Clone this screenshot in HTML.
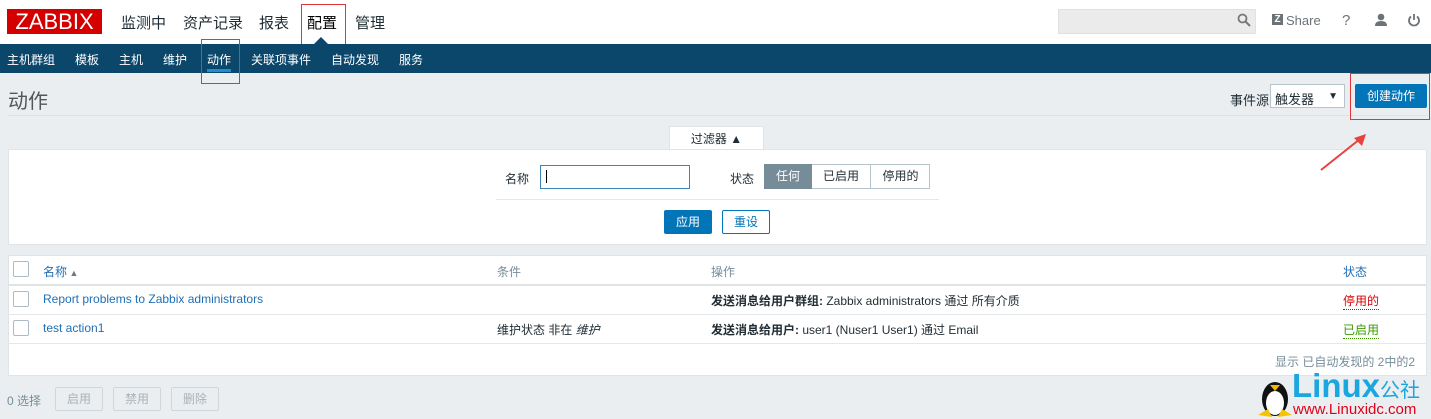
<!DOCTYPE html>
<html><head><meta charset="utf-8"><style>
*{box-sizing:border-box;margin:0;padding:0}
body{width:1431px;height:419px;overflow:hidden;background:#ebeef0;font-family:"Liberation Sans","Noto Sans CJK SC",sans-serif;font-size:12px;color:#1f2c33;position:relative}
.a{position:absolute;white-space:nowrap}
.top{position:absolute;left:0;top:0;width:1431px;height:44px;background:#fff}
.nav{position:absolute;left:0;top:44px;width:1431px;height:29px;background:#0b466b}
.nav span{position:absolute;top:7px;color:#fff;font-size:12px}
.btn{position:absolute;border:1px solid #0275b8;border-radius:2px;text-align:center;font-size:12px}
.dis{position:absolute;border:1px solid #d0d6da;color:#a8b2b8;border-radius:2px;text-align:center;height:24px;line-height:22px;top:387px}
.cb{position:absolute;width:16px;height:16px;border:1px solid #acbbc4;border-radius:2px;background:#fff}
.blue{color:#1f6fb5}
</style></head><body>
<div class="top"></div>
<div class="a" style="left:7px;top:9px;width:95px;height:25px;background:#d40000;color:#fff;font-size:22px;line-height:25px;text-align:center">ZABBIX</div>
<div class="a" style="left:121px;top:12px;font-size:15px">监测中</div>
<div class="a" style="left:183px;top:12px;font-size:15px">资产记录</div>
<div class="a" style="left:259px;top:12px;font-size:15px">报表</div>
<div class="a" style="left:301px;top:4px;width:45px;height:42px;border:1px solid #e0363a"></div>
<div class="a" style="left:307px;top:12px;font-size:15px;color:#000">配置</div>
<div class="a" style="left:314px;top:37px;width:0;height:0;border-left:7px solid transparent;border-right:7px solid transparent;border-bottom:7px solid #0b466b"></div>
<div class="a" style="left:355px;top:12px;font-size:15px">管理</div>
<div class="a" style="left:1058px;top:9px;width:198px;height:25px;background:#ebebeb;border:1px solid #dfe2e4"></div>
<svg class="a" style="left:1237px;top:13px" width="14" height="14" viewBox="0 0 14 14"><circle cx="5.5" cy="5.5" r="4" fill="none" stroke="#777" stroke-width="1.8"/><line x1="8.5" y1="8.5" x2="13" y2="13" stroke="#777" stroke-width="2"/></svg>
<div class="a" style="left:1272px;top:14px;width:11px;height:11px;background:#6b7378;color:#fff;font-size:10px;font-weight:bold;line-height:11px;text-align:center">Z</div>
<div class="a" style="left:1286px;top:13px;color:#6b7378;font-size:13px">Share</div>
<div class="a" style="left:1342px;top:12px;color:#6b7378;font-size:15px">?</div>
<svg class="a" style="left:1374px;top:13px" width="14" height="14" viewBox="0 0 14 14"><circle cx="7" cy="4" r="3.3" fill="#6b7378"/><path d="M1 13 Q1 8 7 8 Q13 8 13 13Z" fill="#6b7378"/></svg>
<svg class="a" style="left:1407px;top:13px" width="14" height="14" viewBox="0 0 14 14"><path d="M4 3.5 A5 5 0 1 0 10 3.5" fill="none" stroke="#6b7378" stroke-width="1.8"/><line x1="7" y1="1" x2="7" y2="7" stroke="#6b7378" stroke-width="1.8"/></svg>
<div class="nav">
<span style="left:7px">主机群组</span><span style="left:75px">模板</span><span style="left:119px">主机</span><span style="left:163px">维护</span><span style="left:207px">动作</span><span style="left:251px">关联项事件</span><span style="left:331px">自动发现</span><span style="left:399px">服务</span>
<div class="a" style="left:207px;top:25px;width:24px;height:3px;background:#1f8dd6"></div>
</div>
<div class="a" style="left:201px;top:39px;width:39px;height:45px;border:1px solid #e0363a"></div>
<div class="a" style="left:8px;top:85px;font-size:20px;color:#555">动作</div>
<div class="a" style="left:8px;top:115px;width:1419px;height:1px;background:#dde2e5"></div>
<div class="a" style="left:1230px;top:90px;font-size:13px">事件源</div>
<div class="a" style="left:1270px;top:84px;width:75px;height:24px;background:#fff;border:1px solid #b8c4cb;padding:4px 4px;font-size:13px">触发器<span style="position:absolute;right:6px;top:6px;font-size:10px">▼</span></div>
<div class="btn" style="left:1355px;top:84px;width:72px;height:24px;background:#0275b8;color:#fff;line-height:22px">创建动作</div>
<div class="a" style="left:1350px;top:73px;width:80px;height:47px;border:1px solid #e0363a"></div>
<div class="a" style="left:669px;top:126px;width:95px;height:24px;background:#fff;border:1px solid #dfe4e7;border-bottom:none;text-align:center;line-height:24px;font-size:12px">过滤器 ▲</div>
<div class="a" style="left:8px;top:149px;width:1419px;height:96px;background:#fff;border:1px solid #dfe4e7"></div>
<div class="a" style="left:505px;top:170px;font-size:12px">名称</div>
<div class="a" style="left:540px;top:165px;width:150px;height:24px;border:1px solid #3d84b8;background:#fff"></div>
<div class="a" style="left:546px;top:170px;width:1px;height:13px;background:#000"></div>
<div class="a" style="left:730px;top:170px">状态</div>
<div class="a" style="left:764px;top:164px;width:166px;height:25px;border:1px solid #b8c4cb;background:#fff"></div>
<div class="a" style="left:764px;top:164px;width:48px;height:25px;background:#768d99;color:#fff;text-align:center;line-height:25px">任何</div>
<div class="a" style="left:812px;top:164px;width:59px;height:25px;border-right:1px solid #b8c4cb;text-align:center;line-height:25px">已启用</div>
<div class="a" style="left:871px;top:164px;width:59px;height:25px;text-align:center;line-height:25px">停用的</div>
<div class="a" style="left:496px;top:199px;width:443px;height:1px;background:#e5e8ea"></div>
<div class="btn" style="left:664px;top:210px;width:48px;height:24px;background:#0275b8;color:#fff;line-height:22px">应用</div>
<div class="btn" style="left:722px;top:210px;width:48px;height:24px;background:#fff;color:#0275b8;line-height:22px">重设</div>
<svg class="a" style="left:1318px;top:132px" width="52" height="42" viewBox="0 0 52 42"><line x1="3" y1="38" x2="42" y2="7" stroke="#e8423e" stroke-width="2"/><path d="M48 2 L36 6 L44 14Z" fill="#e8423e"/></svg>
<div class="a" style="left:8px;top:255px;width:1419px;height:121px;background:#fff;border:1px solid #dfe4e7"></div>
<div class="a" style="left:8px;top:284px;width:1419px;height:2px;background:#dfe4e7"></div>
<div class="a" style="left:8px;top:314px;width:1419px;height:1px;background:#e5e8ea"></div>
<div class="a" style="left:8px;top:343px;width:1419px;height:1px;background:#e5e8ea"></div>
<div class="cb" style="left:13px;top:261px"></div>
<div class="cb" style="left:13px;top:291px"></div>
<div class="cb" style="left:13px;top:320px"></div>
<div class="a blue" style="left:43px;top:263px">名称<span style="font-size:9px;color:#777"> ▲</span></div>
<div class="a" style="left:497px;top:263px;color:#768d99">条件</div>
<div class="a" style="left:711px;top:263px;color:#768d99">操作</div>
<div class="a blue" style="left:1343px;top:263px">状态</div>
<div class="a blue" style="left:43px;top:292px">Report problems to Zabbix administrators</div>
<div class="a" style="left:711px;top:292px"><b>发送消息给用户群组:</b> Zabbix administrators 通过 所有介质</div>
<div class="a" style="left:1343px;top:292px;color:#dc0000;border-bottom:1px dotted #dc0000">停用的</div>
<div class="a blue" style="left:43px;top:321px">test action1</div>
<div class="a" style="left:497px;top:321px">维护状态 非在 <i>维护</i></div>
<div class="a" style="left:711px;top:321px"><b>发送消息给用户:</b> user1 (Nuser1 User1) 通过 Email</div>
<div class="a" style="left:1343px;top:321px;color:#3a9a00;border-bottom:1px dotted #3a9a00">已启用</div>
<div class="a" style="left:1275px;top:353px;color:#768d99">显示 已自动发现的 2中的2</div>
<div class="a" style="left:7px;top:392px;color:#768d99">0 选择</div>
<div class="dis" style="left:55px;width:48px">启用</div>
<div class="dis" style="left:113px;width:48px">禁用</div>
<div class="dis" style="left:171px;width:48px">删除</div>
<svg class="a" style="left:1256px;top:371px" width="38" height="48" viewBox="0 0 38 48"><ellipse cx="19" cy="28" rx="13" ry="17" fill="#111"/><ellipse cx="19" cy="32" rx="9" ry="12" fill="#fff"/><path d="M14 14 L24 14 L19 20Z" fill="#f5b800"/><path d="M2 44 L12 38 L16 46Z M36 44 L26 38 L22 46Z" fill="#f5c400"/></svg>
<div class="a" style="left:1292px;top:369px;font-size:33px;font-weight:bold;color:#1aa6de;line-height:34px">Linux<span style="font-size:20px;font-weight:normal">公社</span></div>
<div class="a" style="left:1293px;top:401px;font-size:15px;color:#e0001a;line-height:17px">www.Linuxidc.com</div>
</body></html>
